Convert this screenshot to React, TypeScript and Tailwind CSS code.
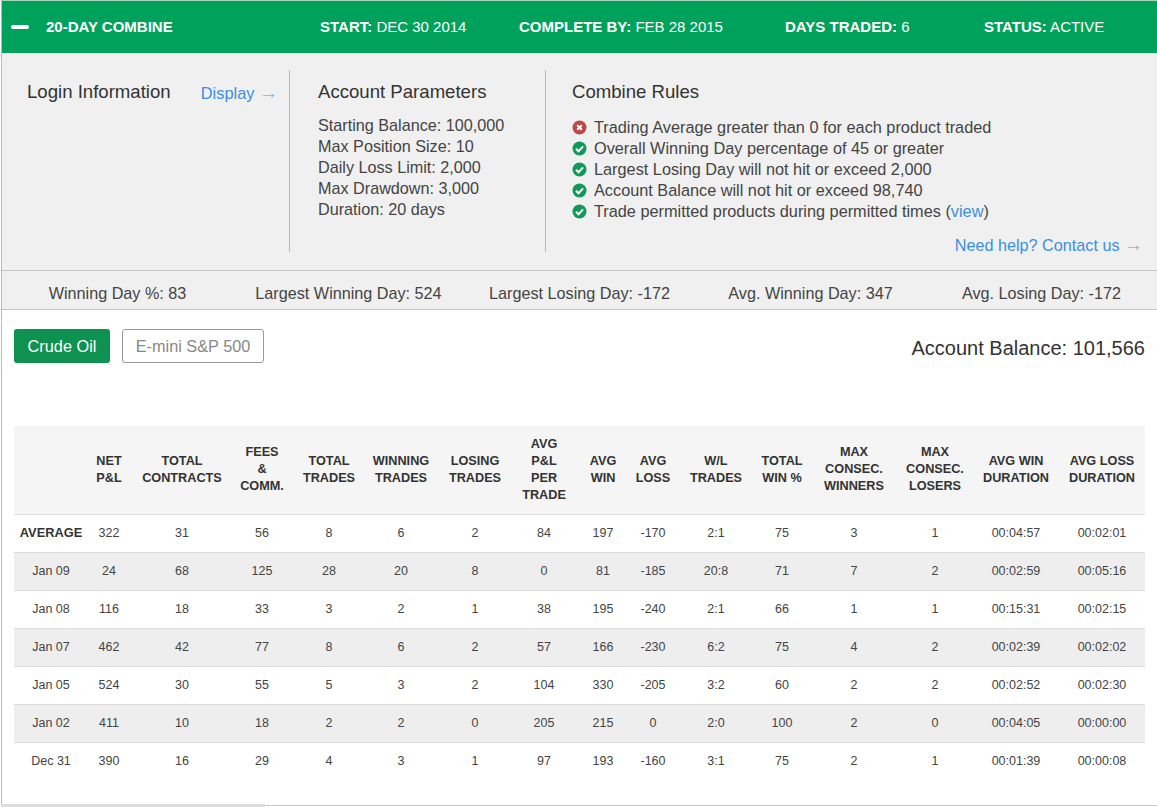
const params = [
  'Starting Balance: 100,000',
  'Max Position Size: 10',
  'Daily Loss Limit: 2,000',
  'Max Drawdown: 3,000',
  'Duration: 20 days',
];

const stats = [
  'Winning Day %: 83',
  'Largest Winning Day: 524',
  'Largest Losing Day: -172',
  'Avg. Winning Day: 347',
  'Avg. Losing Day: -172',
];

const columns = [
  { w: 'w-[72px]', label: [] as string[] },
  { w: 'w-[46px]', label: ['NET', 'P&L'] },
  { w: 'w-[100px]', label: ['TOTAL', 'CONTRACTS'] },
  { w: 'w-[60px]', label: ['FEES', '&', 'COMM.'] },
  { w: 'w-[74px]', label: ['TOTAL', 'TRADES'] },
  { w: 'w-[70px]', label: ['WINNING', 'TRADES'] },
  { w: 'w-[78px]', label: ['LOSING', 'TRADES'] },
  { w: 'w-[60px]', label: ['AVG', 'P&L', 'PER', 'TRADE'] },
  { w: 'w-[58px]', label: ['AVG', 'WIN'] },
  { w: 'w-[42px]', label: ['AVG', 'LOSS'] },
  { w: 'w-[84px]', label: ['W/L', 'TRADES'] },
  { w: 'w-[48px]', label: ['TOTAL', 'WIN %'] },
  { w: 'w-[96px]', label: ['MAX', 'CONSEC.', 'WINNERS'] },
  { w: 'w-[66px]', label: ['MAX', 'CONSEC.', 'LOSERS'] },
  { w: 'w-[96px]', label: ['AVG WIN', 'DURATION'] },
  { w: 'w-[81px]', label: ['AVG LOSS', 'DURATION'] },
];

const rows = [
  ['AVERAGE', '322', '31', '56', '8', '6', '2', '84', '197', '-170', '2:1', '75', '3', '1', '00:04:57', '00:02:01'],
  ['Jan 09', '24', '68', '125', '28', '20', '8', '0', '81', '-185', '20:8', '71', '7', '2', '00:02:59', '00:05:16'],
  ['Jan 08', '116', '18', '33', '3', '2', '1', '38', '195', '-240', '2:1', '66', '1', '1', '00:15:31', '00:02:15'],
  ['Jan 07', '462', '42', '77', '8', '6', '2', '57', '166', '-230', '6:2', '75', '4', '2', '00:02:39', '00:02:02'],
  ['Jan 05', '524', '30', '55', '5', '3', '2', '104', '330', '-205', '3:2', '60', '2', '2', '00:02:52', '00:02:30'],
  ['Jan 02', '411', '10', '18', '2', '2', '0', '205', '215', '0', '2:0', '100', '2', '0', '00:04:05', '00:00:00'],
  ['Dec 31', '390', '16', '29', '4', '3', '1', '97', '193', '-160', '3:1', '75', '2', '1', '00:01:39', '00:00:08'],
];

function RuleIcon({ ok }: { ok: boolean }) {
  return (
    <svg width="15" height="15" viewBox="0 0 15 15" className="shrink-0">
      <circle cx="7.5" cy="7.5" r="7" fill={ok ? '#0f9a5a' : '#b94a48'} />
      {ok ? (
        <path d="M4 7.7l2.5 2.5 4.6-4.8" fill="none" stroke="#fff" strokeWidth="2" />
      ) : (
        <path d="M5.2 5.2l4.6 4.6M9.8 5.2l-4.6 4.6" fill="none" stroke="#fff" strokeWidth="2" />
      )}
    </svg>
  );
}

function Arrow() {
  return <span className="text-[19px] leading-none text-[#7fb4ea]">→</span>;
}

export default function App() {
  return (
    <div className="flex h-[807px] flex-col overflow-hidden bg-white font-['Liberation_Sans',Arial,sans-serif] text-[#444]">
      <div className="ml-[1px] flex h-[804px] shrink-0 flex-col border-l border-[#bbb]">
        {/* green top bar */}
        <div className="flex h-[53px] shrink-0 items-center border-t border-[#a8d5bd] bg-[#00a25b] pl-[9px] text-[15px] text-white">
          <span className="mr-[17px] h-[4px] w-[18px] rounded-full bg-white" />
          <span className="w-[274px] font-bold">20-DAY COMBINE</span>
          <span className="w-[199px]"><b>START:</b> DEC 30 2014</span>
          <span className="w-[266px]"><b>COMPLETE BY:</b> FEB 28 2015</span>
          <span className="w-[199px]"><b>DAYS TRADED:</b> 6</span>
          <span><b>STATUS:</b> ACTIVE</span>
        </div>

        {/* info panel */}
        <div className="flex h-[218px] shrink-0 border-b border-[#c4c4c4] bg-[#f0f0f0] pt-[17px]">
          <div className="flex h-[182px] w-[288px] shrink-0 items-start justify-between border-r border-[#bbb] pl-[25px] pr-[11px]">
            <h2 className="mt-[10px] text-[18.6px] leading-[24px] text-[#333]">Login Information</h2>
            <a className="mt-[12px] text-[16.4px] leading-[22px] text-[#3b8fe0]">Display <Arrow /></a>
          </div>
          <div className="h-[182px] w-[256px] shrink-0 border-r border-[#bbb] pl-[28px]">
            <h2 className="mt-[10px] text-[18.6px] leading-[24px] text-[#333]">Account Parameters</h2>
            <ul className="mt-[11px] text-[16.2px] leading-[21px]">
              {params.map((p) => (
                <li key={p}>{p}</li>
              ))}
            </ul>
          </div>
          <div className="flex-1 pl-[26px] pr-[14px]">
            <h2 className="mt-[10px] text-[18.6px] leading-[24px] text-[#333]">Combine Rules</h2>
            <ul className="mt-[13px] text-[16.3px] leading-[21px]">
              <li className="flex items-center gap-[7px]"><RuleIcon ok={false} />Trading Average greater than 0 for each product traded</li>
              <li className="flex items-center gap-[7px]"><RuleIcon ok />Overall Winning Day percentage of 45 or greater</li>
              <li className="flex items-center gap-[7px]"><RuleIcon ok />Largest Losing Day will not hit or exceed 2,000</li>
              <li className="flex items-center gap-[7px]"><RuleIcon ok />Account Balance will not hit or exceed 98,740</li>
              <li className="flex items-center gap-[7px]"><RuleIcon ok /><span>Trade permitted products during permitted times (<a className="text-[#3b8fe0]">view</a>)</span></li>
            </ul>
            <div className="mt-[12px] text-right text-[16.2px] leading-[22px] text-[#3b8fe0]">Need help? Contact us <Arrow /></div>
          </div>
        </div>

        {/* summary stats */}
        <div className="grid h-[39px] shrink-0 grid-cols-5 items-center border-b border-[#c4c4c4] bg-[#f0f0f0] pt-[6px] text-center text-[16.2px]">
          {stats.map((s) => (
            <span key={s}>{s}</span>
          ))}
        </div>

        {/* products + table */}
        <div className="flex-1 pl-[12px] pr-[12px]">
          <div className="flex items-start justify-between pt-[19px]">
            <div className="flex gap-[12px]">
              <button className="h-[34px] w-[96px] rounded-[3px] bg-[#0f9150] text-[16.3px] text-white">Crude Oil</button>
              <button className="h-[34px] w-[142px] rounded-[3px] border border-[#999] bg-white text-[16.3px] text-[#888]">E-mini S&amp;P 500</button>
            </div>
            <div className="mt-[7px] text-[20px] leading-[24px] text-[#333]">Account Balance: 101,566</div>
          </div>

          <table className="mt-[63px] w-[1131px] table-fixed border-collapse text-center text-[12.5px] text-[#444]">
            <thead>
              <tr className="h-[88px] border-b border-[#ddd] bg-[#f5f5f5] text-[#333]">
                {columns.map((c, i) => (
                  <th key={i} className={`${c.w} p-0 text-[12.7px] font-bold leading-[17px] ${i === 15 ? 'pr-[5px]' : ''}`}>
                    {c.label.map((l) => (
                      <div key={l}>{l}</div>
                    ))}
                  </th>
                ))}
              </tr>
            </thead>
            <tbody>
              {rows.map((r, i) => (
                <tr key={r[0]} className={`h-[38px] border-b ${i === 1 || i === 3 || i === 5 ? 'bg-[#eee]' : 'bg-white'} ${i === 6 ? 'border-transparent' : 'border-[#ddd]'}`}>
                  {r.map((v, j) => (
                    <td key={j} className={`p-0 ${j === 0 ? 'pl-[2px]' : ''} ${j === 0 && i === 0 ? 'pb-[1px] text-[12.8px] font-bold text-[#333]' : ''} ${j === 15 ? 'pr-[5px]' : ''}`}>
                      {v}
                    </td>
                  ))}
                </tr>
              ))}
            </tbody>
          </table>
        </div>
      </div>
      {/* bottom edge */}
      <div className="flex h-[3px] shrink-0 items-start pl-[1px]">
        <div className="h-[3px] w-[264px] bg-[#ddd]" />
        <div className="mt-[1px] h-[1px] flex-1 bg-[#c8c8c8]" />
      </div>
    </div>
  );
}
